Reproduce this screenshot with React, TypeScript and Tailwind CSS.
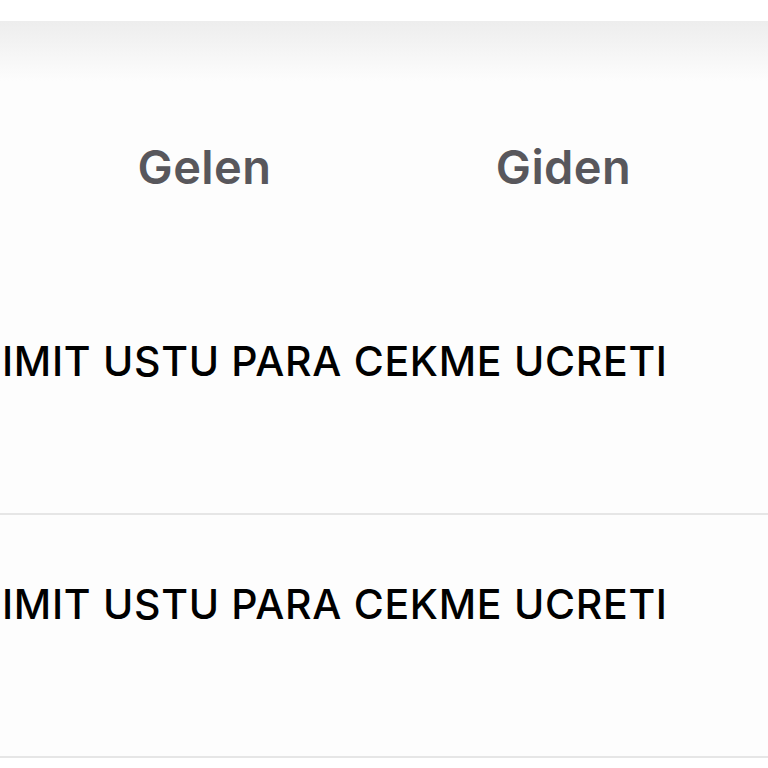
import React from "react";

const rowText = "IMIT USTU PARA CEKME UCRETI";

export default function App() {
  return (
    <div className="w-[768px] h-[768px] overflow-hidden bg-white" style={{ fontFamily: "Inter, 'Liberation Sans', sans-serif" }}>
      <div className="h-[21px] bg-white" />
      <div className="h-[60px] bg-gradient-to-b from-[#ededed] to-[#fdfdfd]" />
      <div className="grid grid-cols-2 px-[25px] h-[191px] bg-[#fdfdfd]">
        <div className="flex justify-center pt-[58px]">
          <span className="text-[47px] leading-[56px] font-semibold text-[#58575c] tracking-[0.4px]">Gelen</span>
        </div>
        <div className="flex justify-center pt-[58px]">
          <span className="text-[47px] leading-[56px] font-semibold text-[#58575c] tracking-[0.4px]">Giden</span>
        </div>
      </div>
      {[0, 1].map((i) => (
        <div key={i} className="h-[243px] border-b-2 border-[#e6e6e6] bg-[#fdfdfd]">
          <div className="pt-[64px] pl-[2px]">
            <span className="block text-[41px] leading-[50px] font-medium text-black whitespace-nowrap tracking-[0.7px]">{rowText}</span>
          </div>
        </div>
      ))}
    </div>
  );
}
